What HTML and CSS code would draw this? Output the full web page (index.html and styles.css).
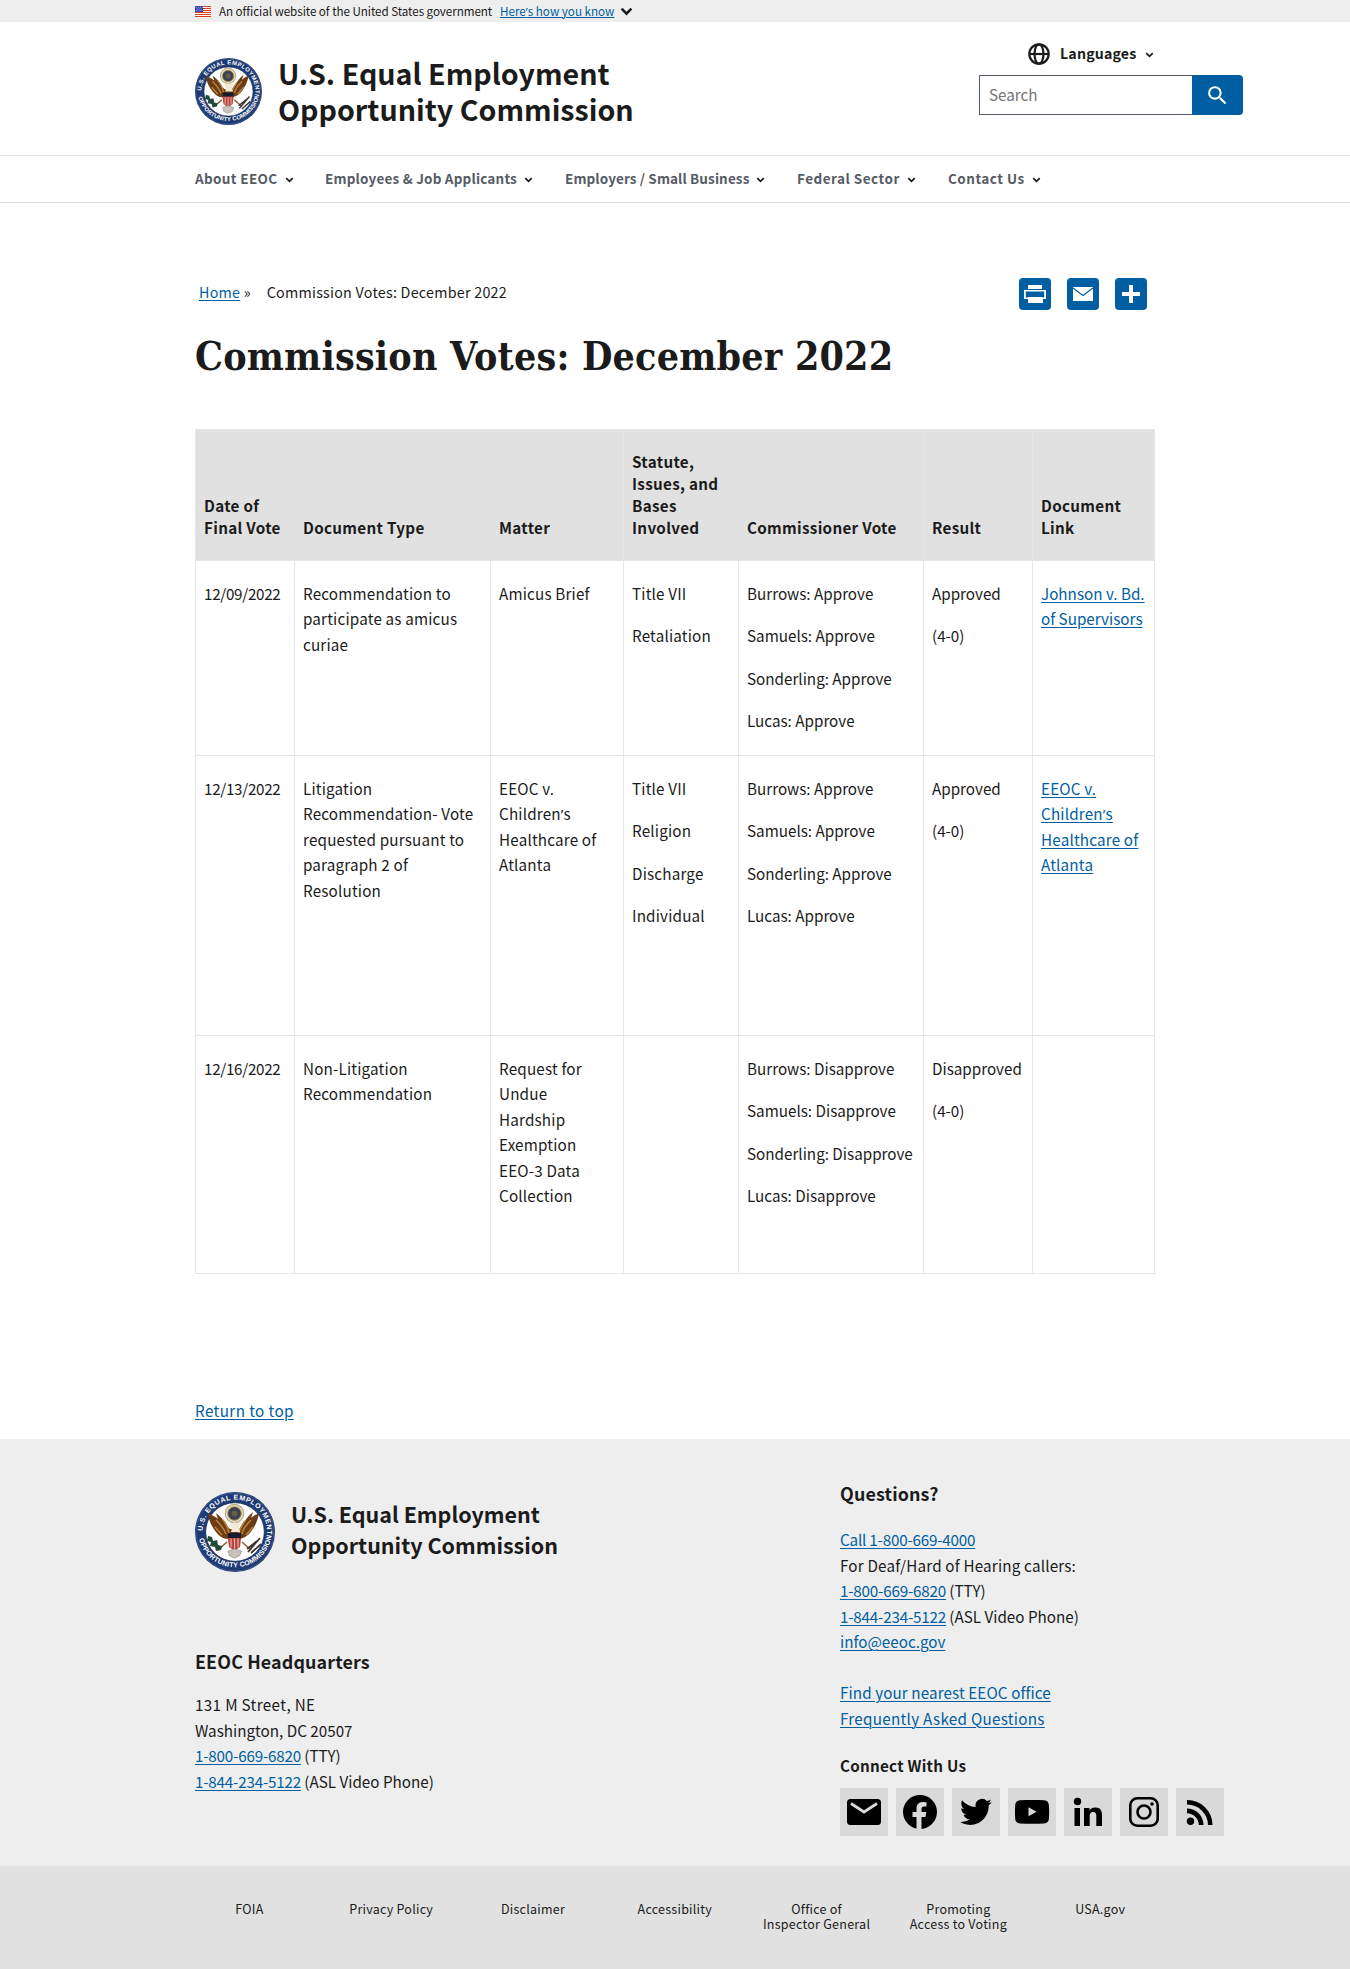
FILE: index.html
```html
<!DOCTYPE html>
<html lang="en">
<head>
<meta charset="utf-8">
<title>Commission Votes: December 2022 | U.S. Equal Employment Opportunity Commission</title>
<link rel="stylesheet" href="styles.css">
</head>
<body>
<svg class="defs" width="0" height="0" aria-hidden="true">
  <symbol id="chevron" viewBox="0 0 10 7"><path d="M1.2 1.3 5 5.1 8.8 1.3" fill="none" stroke="currentColor" stroke-width="2"/></symbol>
</svg>

<div class="banner">
  <div class="wrap banner-inner">
    <svg class="flag" viewBox="0 0 16 11"><path fill="#fff" d="M0 0h16v11H0z"/><path stroke="#db3e1f" stroke-width="1" d="M0 .5h16M0 2.500h16M0 4.500h16M0 6.500h16M0 8.500h16M0 10.500h16"/><path fill="#1e33b1" d="M0 0h8v6H0z"/><path stroke="#fff" stroke-width=".8" stroke-dasharray="1 1" d="M.7 1.200h7M1.600 3h6M.7 4.700h7"/></svg>
    <span class="banner-text">An official website of the United States government</span>
    <a class="banner-link" href="#">Here<span class="apos">’</span>s how you know</a>
    <svg class="banner-chev"><use href="#chevron"/></svg>
  </div>
</div>

<header class="header">
  <div class="wrap header-inner">
    <svg class="logo" viewBox="0 0 80 80">
      <g id="seal">
        <circle cx="40" cy="40" r="40" fill="#1f3b74"/>
        <circle cx="40" cy="40" r="39" fill="none" stroke="#4d669b" stroke-width=".6"/>
        <circle cx="40" cy="40" r="29.3" fill="#fff" stroke="#14264f" stroke-width=".7"/>
        <path id="arc-top" d="M8.1 45A32.3 32.3 0 1 1 71.9 45" fill="none"/>
        <path id="arc-bottom" d="M3.3 43A37 37 0 0 0 76.7 43" fill="none"/>
        <text class="seal-text"><textPath href="#arc-top" startOffset="6" textLength="103">U.S. EQUAL EMPLOYMENT</textPath></text>
        <text class="seal-text"><textPath href="#arc-bottom" startOffset="4" textLength="102">OPPORTUNITY COMMISSION</textPath></text>
        <circle cx="39.500" cy="21.500" r="9.200" fill="#e9e3cf" stroke="#b9ad84" stroke-width="1.200"/>
        <circle cx="39.500" cy="21.500" r="6.800" fill="#3b4056" stroke="#a8903f" stroke-width="1"/>
        <circle cx="39.500" cy="21.500" r="3" fill="#65603e"/>
        <path d="M15 22c2 1 6 3 8 5l-2-6c5 4 9 8 11 13l3 3h9l4-4c2-5 5-9 10-13l-2 6c2-2 6-4 8-5-1 7-4 14-9 20-4 4-8 6-12 6l-5 3-5-3c-5 0-9-3-12-7-4-5-7-11-8-18z" fill="#6b3d17"/>
        <path d="M21 28c4 4 8 8 10 14M27 27c4 4 6 9 7 14M56 28c-4 4-8 8-9 14M50 29c-3 4-5 7-6 12M20 35l7 8M58 35l-7 8" stroke="#bd8038" stroke-width="1.600" fill="none"/>
        <path d="M35 33c1-3 5-3 8-2l4-1-3 4 1 6h-9l1-4z" fill="#f2ead8"/>
        <path d="M33 41h13v6l-1 8-5.500 4-5.500-4-1-8z" fill="#b8423a"/>
        <path d="M33 41h13v5H33z" fill="#161b2f"/>
        <path d="M36 46.500v9M39.500 46.500v12M43 46.500v9" stroke="#e3b5aa" stroke-width="1.200"/>
        <path d="M33 59l6.500-2 7 2-2 5-5 2-5-2z" fill="#c8c2b9" stroke="#8b8783" stroke-width=".6"/>
        <path d="M32 50l-9 8M47 50l9 8" stroke="#8a6236" stroke-width="1.600"/>
        <path d="M13 44l4 1 1 4 4-1 1 5 4 1-1 4-5 1-1-4-5-1 1-4-4-1z" fill="#214b38"/>
        <path d="M53 60l12-14M52 57l10-8M56 61l10-9" stroke="#3b342c" stroke-width="1.700"/>
      </g>
    </svg>
    <div class="site-title">U.S. Equal Employment<br>Opportunity Commission</div>
    <div class="tools">
      <div class="languages">
        <svg class="globe" viewBox="0 0 22 22" fill="none" stroke="#1b1b1b" stroke-width="2.200"><circle cx="11" cy="11" r="9.700"/><ellipse cx="11" cy="11" rx="4.500" ry="9.700"/><path d="M2 11h18"/></svg>
        <span>Languages</span>
        <svg class="chev"><use href="#chevron"/></svg>
      </div>
      <div class="search">
        <div class="search-input">Search</div>
        <div class="search-btn"><svg viewBox="0 0 24 24" width="25" height="25"><path fill="#fff" d="M15.500 14h-.79l-.28-.27A6.470 6.470 0 0 0 16 9.500 6.500 6.500 0 1 0 9.500 16c1.610 0 3.090-.59 4.230-1.570l.27.28v.79l5 4.990L20.490 19l-4.990-5zm-6 0C7.010 14 5 11.990 5 9.500S7.010 5 9.500 5 14 7.010 14 9.500 11.990 14 9.500 14z"/></svg></div>
      </div>
    </div>
  </div>
</header>

<nav class="nav">
  <div class="wrap nav-inner">
    <div class="nav-item n1"><span>About EEOC</span><svg class="chev"><use href="#chevron"/></svg></div>
    <div class="nav-item n2"><span>Employees &amp; Job Applicants</span><svg class="chev"><use href="#chevron"/></svg></div>
    <div class="nav-item n3"><span>Employers / Small Business</span><svg class="chev"><use href="#chevron"/></svg></div>
    <div class="nav-item n4"><span>Federal Sector</span><svg class="chev"><use href="#chevron"/></svg></div>
    <div class="nav-item n5"><span>Contact Us</span><svg class="chev"><use href="#chevron"/></svg></div>
  </div>
</nav>

<main class="wrap main">
  <div class="crumb-row">
    <div class="crumbs"><a href="#">Home</a> <span class="sep">»</span><span>Commission Votes: December 2022</span></div>
    <div class="share">
      <svg viewBox="0 0 32 32"><rect width="32" height="32" rx="4" fill="#005ea2"/><path fill="#fff" d="M9 7h14v4H9z"/><path fill="#fff" d="M5 12h22v9h-3v4H9v-4H5z"/><path fill="#005ea2" d="M6.800 13.500h18.400v6h-2V19H9v.5H6.800z"/><path fill="#fff" d="M9 19.500h15V25H9z"/></svg>
      <svg viewBox="0 0 32 32"><rect width="32" height="32" rx="4" fill="#005ea2"/><path fill="#fff" d="M6 9h20v14H6z"/><path fill="none" stroke="#005ea2" stroke-width="1.200" d="M6 10l10 7.500L26 10"/></svg>
      <svg viewBox="0 0 32 32"><rect width="32" height="32" rx="4" fill="#005ea2"/><path fill="#fff" d="M14 7h4v7h7v4h-7v7h-4v-7H7v-4h7z"/></svg>
    </div>
  </div>
  <h1>Commission Votes: December 2022</h1>

  <table class="votes">
    <colgroup><col class="c1"><col class="c2"><col class="c3"><col class="c4"><col class="c5"><col class="c6"><col class="c7"></colgroup>
    <thead>
      <tr><th class="joined">Date of<br>Final Vote</th><th class="joined">Document Type</th><th>Matter</th><th class="joined">Statute,<br>Issues, and<br>Bases<br>Involved</th><th>Commissioner Vote</th><th>Result</th><th>Document<br>Link</th></tr>
    </thead>
    <tbody>
      <tr class="r1">
        <td class="date">12/09/2022</td><td class="doc">Recommendation to<br>participate as amicus<br>curiae</td><td class="doc">Amicus Brief</td>
        <td class="doc"><p>Title VII</p><p>Retaliation</p></td>
        <td><p>Burrows: Approve</p><p>Samuels: Approve</p><p>Sonderling: Approve</p><p>Lucas: Approve</p></td>
        <td><p>Approved</p><p>(4-0)</p></td>
        <td><a href="#">Johnson v. Bd.<br>of Supervisors</a></td>
      </tr>
      <tr class="r2">
        <td class="date">12/13/2022</td><td class="doc">Litigation<br>Recommendation- Vote<br>requested pursuant to<br>paragraph 2 of<br>Resolution</td><td class="doc">EEOC v.<br>Children<span class="apos">’</span>s<br>Healthcare of<br>Atlanta</td>
        <td class="doc"><p>Title VII</p><p>Religion</p><p>Discharge</p><p>Individual</p></td>
        <td><p>Burrows: Approve</p><p>Samuels: Approve</p><p>Sonderling: Approve</p><p>Lucas: Approve</p></td>
        <td><p>Approved</p><p>(4-0)</p></td>
        <td class="doc"><a href="#">EEOC v.<br>Children<span class="apos">’</span>s<br>Healthcare of<br>Atlanta</a></td>
      </tr>
      <tr class="r3">
        <td class="date">12/16/2022</td><td class="doc">Non-Litigation<br>Recommendation</td><td class="doc">Request for<br>Undue<br>Hardship<br>Exemption<br>EEO-3 Data<br>Collection</td>
        <td></td>
        <td><p>Burrows: Disapprove</p><p>Samuels: Disapprove</p><p>Sonderling: Disapprove</p><p>Lucas: Disapprove</p></td>
        <td><p>Disapproved</p><p>(4-0)</p></td>
        <td></td>
      </tr>
    </tbody>
  </table>
  <div class="return"><a href="#">Return to top</a></div>
</main>

<footer>
  <div class="footer-main">
    <div class="wrap footer-inner">
      <div class="footer-left">
        <div class="footer-brand">
          <svg class="footer-logo" viewBox="0 0 80 80"><use href="#seal"/></svg>
          <div class="footer-title">U.S. Equal Employment<br>Opportunity Commission</div>
        </div>
        <h2>EEOC Headquarters</h2>
        <address><span class="street">131 M Street, NE</span><br>Washington, DC 20507<br><a class="phone" href="#">1-800-669-6820</a> (TTY)<br><a class="phone" href="#">1-844-234-5122</a> (ASL Video Phone)</address>
      </div>
      <div class="footer-right">
        <h2>Questions?</h2>
        <div class="contact"><a class="phone" href="#">Call 1-800-669-4000</a><br><span class="doc">For Deaf/Hard of Hearing callers:</span><br><a class="phone" href="#">1-800-669-6820</a> (TTY)<br><a class="phone" href="#">1-844-234-5122</a> (ASL Video Phone)<br><a href="#">info@eeoc.gov</a><br><br><a class="office" href="#">Find your nearest EEOC office</a><br><a class="faq" href="#">Frequently Asked Questions</a></div>
        <h3>Connect With Us</h3>
        <div class="social">
          <svg viewBox="0 0 48 48"><rect x="7" y="11" width="34" height="26" rx="3.500"/><path d="M11 15.500l13 8.500 13-8.500" fill="none" stroke="#d9d9d9" stroke-width="2.800"/></svg>
          <svg viewBox="0 0 48 48"><circle cx="24" cy="24" r="17"/><path fill="#d9d9d9" d="M20.500 41V29H16.500v-5h4v-3.500c0-4.300 2.500-6.500 6.400-6.500 1.600 0 3.600.3 3.600.3v4.200h-2.200c-2.200 0-2.800 1.300-2.800 2.600V24h4.800l-.8 5h-4v12z"/></svg>
          <svg viewBox="0 0 48 48"><path transform="translate(8 8) scale(1.330)" d="M23.950 4.570a10 10 0 0 1-2.820.77 4.960 4.960 0 0 0 2.160-2.720c-.95.550-2 .95-3.120 1.180a4.920 4.920 0 0 0-8.390 4.480C7.690 8.090 4.070 6.130 1.640 3.160a4.820 4.820 0 0 0-.67 2.480c0 1.710.87 3.210 2.190 4.090a4.900 4.900 0 0 1-2.230-.61v.06c0 2.390 1.700 4.380 3.950 4.830a5 5 0 0 1-2.210.08 4.940 4.940 0 0 0 4.600 3.420A9.870 9.870 0 0 1 0 19.540a14 14 0 0 0 7.550 2.210c9.050 0 14-7.500 14-13.980 0-.21 0-.42-.02-.63a9.940 9.940 0 0 0 2.420-2.570z"/></svg>
          <svg viewBox="0 0 48 48"><path d="M12 12.300c8-.5 16-.5 24 0 3.500.3 4.600 2 4.900 5 .3 4.500.3 9 0 13.500-.3 3-1.600 4.300-4.900 4.600-8 .5-16 .5-24 0-3.300-.3-4.500-1.600-4.800-4.600-.3-4.500-.3-9 0-13.500.3-3 1.500-4.700 4.800-5z"/><path fill="#d9d9d9" d="M20.500 19.300v9l8-4.500z"/></svg>
          <svg viewBox="0 0 48 48"><circle cx="13.500" cy="13.500" r="3.700"/><path d="M10.500 20H16v18h-5.500zM20 20h5.500v2.500c1-1.800 3-3 5.700-3 5.600 0 6.800 3.500 6.800 8.300V38h-5.700v-9c0-2.500-.1-5-3.100-5-3 0-3.500 2.300-3.500 4.800V38H20z"/></svg>
          <svg viewBox="0 0 48 48" fill="none" stroke="#000" stroke-width="2.600"><rect x="10.300" y="10.300" width="27.400" height="27.400" rx="7"/><circle cx="24" cy="24" r="6.500"/><circle cx="32" cy="16" r="1.800" fill="#000" stroke="none"/></svg>
          <svg viewBox="0 0 48 48"><circle cx="14.500" cy="33.300" r="3.700"/><path d="M11 12a25 25 0 0 1 25.500 25H32A20.800 20.800 0 0 0 11 16.500z M11 20.500A16.500 16.500 0 0 1 27.500 37H22.800A12 12 0 0 0 11 25.200z"/></svg>
        </div>
      </div>
    </div>
  </div>
  <div class="footer-bottom">
    <div class="links"><span>FOIA</span><span>Privacy Policy</span><span>Disclaimer</span><span>Accessibility</span><span>Office of<br>Inspector General</span><span>Promoting<br>Access to Voting</span><span>USA.gov</span></div>
  </div>
</footer>
</body>
</html>
```
FILE: styles.css
```css
* { box-sizing: border-box; }

body {
  margin: 0;
  background: #fff;
  color: #1b1b1b;
  font-family: "Noto Sans CJK SC", "Open Sans", sans-serif;
  font-size: 15.22px;
  line-height: 25.5px;
}

a { color: #005ea2; text-decoration: underline; text-underline-offset: 2px; text-decoration-thickness: 1px; }
svg { display: block; flex: none; }
p { margin: 0; }
.defs { position: absolute; }
.wrap { width: 960px; margin: 0 auto; }
.seal-text { font: bold 7px "Liberation Sans", sans-serif; fill: #fff; }
.apos { font-family: "Open Sans", sans-serif; line-height: 1; }

/* Government banner */
.banner { height: 22px; background: #eee; }
.banner-inner { display: flex; align-items: center; height: 22px; font-size: 11.65px; line-height: 22px; white-space: nowrap; }
.flag { width: 16px; height: 11px; margin-right: 8px; }
.banner-text { width: 281px; letter-spacing: -.06px; }
.banner-link { width: 117px; text-underline-offset: 1px; }
.banner-chev { width: 13px; height: 9px; margin-left: 3px; color: #1b1b1b; }

/* Header */
.header { height: 133px; }
.header-inner { display: flex; }
.logo { width: 67px; height: 67px; margin-top: 36px; }
.site-title { flex: none; width: 480px; margin: 33px 0 0 16px; font-size: 28.65px; font-weight: 700; line-height: 36px; }
.tools { flex: none; width: 264px; margin: 20px 0 0 221px; }
.languages { display: flex; align-items: center; height: 24px; margin-left: 49px; font-size: 14.2px; font-weight: 700; letter-spacing: .15px; }
.globe { width: 22px; height: 22px; margin-right: 10px; }
.chev { width: 9px; height: 6px; margin: 2px 0 0 7px; color: #1b1b1b; }
.languages .chev { margin-left: 9px; }
.search { display: flex; width: 264px; height: 40px; margin-top: 9px; }
.search-input { width: 213px; padding-left: 9px; border: 1px solid #565c65; border-right: 0; color: #757575; font-size: 15.22px; line-height: 37px; }
.search-btn { display: flex; align-items: center; justify-content: center; width: 51px; border-radius: 0 4px 4px 0; background: #005ea2; }

/* Navigation */
.nav { height: 48px; border-top: 1px solid #dfe1e2; border-bottom: 1px solid #dfe1e2; }
.nav-inner { display: flex; height: 46px; }
.nav-item { display: flex; align-items: center; color: #565c65; font-size: 13.5px; font-weight: 700; white-space: nowrap; }
.n1 { width: 130px; letter-spacing: .35px; }
.n2 { width: 240px; letter-spacing: .2px; }
.n3 { width: 232px; letter-spacing: .12px; }
.n4 { width: 151px; letter-spacing: .5px; }
.n5 { letter-spacing: .5px; }

/* Page content */
.main { height: 1236px; padding-top: 75px; }
.crumb-row { display: flex; justify-content: space-between; height: 32px; }
.crumbs { padding-left: 4px; font-size: 14.3px; line-height: 27px; letter-spacing: .25px; }
.sep { display: inline-block; width: 23px; }
.share { display: flex; gap: 16px; padding-right: 8px; }
.share svg { width: 32px; height: 32px; }
h1 { height: 52px; margin: 20px 0 47px; font: bold 39px/52px "DejaVu Serif Condensed", "DejaVu Serif", serif; font-stretch: condensed; letter-spacing: .2px; white-space: nowrap; }

.votes { width: 959px; table-layout: fixed; border-collapse: collapse; }
.votes th, .votes td { border: 1px solid #e6e6e6; padding: 19.5px 0 0 8px; text-align: left; vertical-align: top; white-space: nowrap; }
.votes th { height: 131px; padding: 0 0 22px 8px; background: #e1e1e1; line-height: 22px; letter-spacing: .3px; vertical-align: bottom; }
.votes th.joined { border-right-color: #e1e1e1; }
.votes .joined + th { border-left-color: #e1e1e1; }
.votes p + p { margin-top: 17px; }
.votes .date { letter-spacing: -.3px; }
.doc { letter-spacing: .18px; }
.c1 { width: 99px; }
.c2 { width: 196px; }
.c3 { width: 133px; }
.c4 { width: 115px; }
.c5 { width: 185px; }
.c6 { width: 109px; }
.c7 { width: 122px; }
.r1 { height: 195px; }
.r2 { height: 280px; }
.r3 { height: 238px; }
.return { margin-top: 124px; letter-spacing: .4px; }

/* Footer */
.footer-main { height: 427px; background: #eee; }
.footer-inner { display: flex; }
.footer-left { flex: none; width: 645px; padding-top: 53px; }
.footer-right { flex: none; width: 385px; padding-top: 41px; }
.footer-brand { display: flex; height: 80px; }
.footer-logo { width: 80px; height: 80px; }
.footer-title { padding: 6px 0 0 16px; font-size: 21.5px; font-weight: 700; line-height: 31px; }
h2 { margin: 0; font-size: 17.9px; line-height: 26px; letter-spacing: .12px; }
.footer-left h2 { margin-top: 76px; }
address { margin-top: 18px; font-style: normal; }
.street { letter-spacing: .35px; }
.phone { letter-spacing: -.2px; }
.office { letter-spacing: .1px; }
.faq { letter-spacing: .28px; }
.contact { margin-top: 21px; }
h3 { margin: 22px 0 0; font-size: 15.22px; line-height: 25px; letter-spacing: .25px; }
.social { display: flex; gap: 8px; margin-top: 10px; }
.social svg { width: 48px; height: 48px; background: #d9d9d9; }
.footer-bottom { height: 103px; background: #e1e1e1; }
.links { display: grid; grid-template-columns: repeat(7, 141.800px); width: 993px; margin: 0 auto; padding-top: 35px; font-size: 12.5px; line-height: 15px; letter-spacing: .25px; text-align: center; }
```
